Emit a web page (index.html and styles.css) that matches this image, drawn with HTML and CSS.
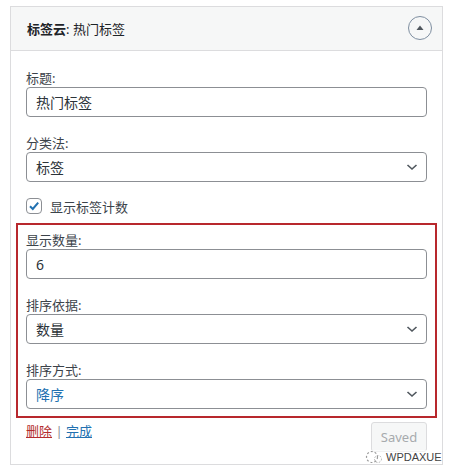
FILE: index.html
```html
<!DOCTYPE html>
<html lang="zh-CN">
<head>
    <meta charset="UTF-8">
    <meta name="viewport" content="width=device-width, initial-scale=1.0">
    <link rel="stylesheet" href="styles.css">
    <title>标签云小工具</title>
</head>
<body>

    <div class="widget">
        <!-- 小工具标题栏 -->
        <div class="widget-top">
            <h3 class="widget-title"><strong>标签云</strong>: 热门标签</h3>
            <span class="toggle">
                <svg width="10" height="8" viewBox="0 0 10 8"><path d="M5 1.5 L8.5 6 L1.5 6 Z" fill="#50575e"/></svg>
            </span>
        </div>

        <!-- 设置内容 -->
        <div class="widget-inside">
            <p class="field">
                <label>标题:</label>
                <span class="input">热门标签</span>
            </p>

            <p class="field">
                <label>分类法:</label>
                <span class="select">
                    <span>标签</span>
                    <svg width="14" height="10" viewBox="0 0 14 10"><path d="M2.5 3 L7 7 L11.5 3" fill="none" stroke="#50575e" stroke-width="1.6"/></svg>
                </span>
            </p>

            <p class="check-row">
                <span class="checkbox">
                    <svg width="14" height="14" viewBox="0 0 14 14"><path d="M3 7.2 L5.8 10 L11.2 3.6" fill="none" stroke="#2271b1" stroke-width="2"/></svg>
                </span>
                <span>显示标签计数</span>
            </p>

            <!-- 红框标注部分 -->
            <div class="highlight">
                <p class="field">
                    <label>显示数量:</label>
                    <span class="input num">6</span>
                </p>

                <p class="field">
                    <label>排序依据:</label>
                    <span class="select">
                        <span>数量</span>
                        <svg width="14" height="10" viewBox="0 0 14 10"><path d="M2.5 3 L7 7 L11.5 3" fill="none" stroke="#50575e" stroke-width="1.6"/></svg>
                    </span>
                </p>

                <p class="field last">
                    <label>排序方式:</label>
                    <span class="select active">
                        <span>降序</span>
                        <svg width="14" height="10" viewBox="0 0 14 10"><path d="M2.5 3 L7 7 L11.5 3" fill="none" stroke="#50575e" stroke-width="1.6"/></svg>
                    </span>
                </p>
            </div>

            <div class="widget-control">
                <div class="links">
                    <a href="#" class="delete">删除</a> <span class="sep">|</span> <a href="#" class="close">完成</a>
                </div>
                <button class="saved" disabled>Saved</button>
            </div>
        </div>
    </div>

    <!-- 右下角水印 -->
    <div class="mark">
        <svg width="18" height="14" viewBox="0 0 18 14"><circle cx="7" cy="7" r="5.5" fill="none" stroke="#9a9a9a" stroke-width="1.2" stroke-dasharray="2 2"/><circle cx="13" cy="9" r="3.5" fill="none" stroke="#b0b0b0" stroke-width="1" stroke-dasharray="1.5 1.5"/></svg>
        <span>WPDAXUE</span>
    </div>

</body>
</html>
```

FILE: styles.css
```css
/* 页面基础 */
html {
    background-color: #ffffff;
}

body {
    margin: 6px 0 0 10px;
    padding: 0;
    font-family: "Noto Sans", "Noto Sans CJK SC", sans-serif;
    font-size: 13px;
    color: #2c3338;
}

/* 小工具外框 */
.widget {
    width: 433px;
    box-sizing: border-box;
    border: 1px solid #dcdcde;
    background-color: #ffffff;
}

.widget-top {
    height: 44px;
    box-sizing: border-box;
    background-color: #f6f7f7;
    border-bottom: 1px solid #dcdcde;
    display: flex;
    align-items: center;
    justify-content: space-between;
    padding: 0 10px 1px 16px;
}

.widget-title {
    margin: 0;
    font-size: 13px;
    font-weight: normal;
    color: #1d2327;
}

.widget-title strong {
    font-weight: 600;
}

.toggle {
    width: 22px;
    height: 22px;
    border: 1px solid #7e8ea0;
    border-radius: 50%;
    display: flex;
    align-items: center;
    justify-content: center;
}

/* 设置内容 */
.widget-inside {
    padding: 18px 15px 12px;
}

.field {
    margin: 0 0 17px;
}

.field label {
    display: block;
    line-height: 18px;
    color: #3c434a;
}

.input,
.select {
    display: flex;
    align-items: center;
    height: 30px;
    box-sizing: border-box;
    border: 1px solid #8c8f94;
    border-radius: 4px;
    padding: 0 9px;
    font-size: 14px;
    color: #2c3338;
    background-color: #ffffff;
}

.select {
    justify-content: space-between;
    padding-right: 7px;
}

.select.active {
    color: #2271b1;
}

.check-row {
    display: flex;
    align-items: center;
    gap: 8px;
    margin: -1px 0 9px;
    height: 16px;
    color: #3c434a;
}

.checkbox {
    width: 16px;
    height: 16px;
    box-sizing: border-box;
    border: 1px solid #8c8f94;
    border-radius: 4px;
    display: flex;
    align-items: center;
    justify-content: center;
}

/* 红框 */
.highlight {
    margin: 0 -10px;
    padding: 6px 8px 7px;
    border: 2px solid #b8282d;
}

.field.last {
    margin-bottom: 0;
}

/* 底部操作 */
.widget-control {
    display: flex;
    justify-content: space-between;
    align-items: flex-start;
    margin-top: 4px;
}

.links {
    line-height: 18px;
    padding-top: 0;
}

.links a {
    text-decoration: underline;
}

.delete {
    color: #b32d2e;
}

.close {
    color: #2271b1;
}

.sep {
    color: #8c8f94;
}

.saved {
    height: 30px;
    width: 56px;
    border: 1px solid #dcdcde;
    border-radius: 3px;
    background-color: #f6f7f7;
    color: #a7aaad;
    font-family: "Noto Sans", sans-serif;
    font-size: 13px;
    padding: 0;
}

/* 水印 */
.mark {
    position: absolute;
    left: 365px;
    top: 450px;
    display: flex;
    align-items: center;
    gap: 3px;
    font-family: "Liberation Sans", sans-serif;
    font-size: 11px;
    color: #444;
    background-color: rgba(255, 255, 255, 0.6);
}
```
